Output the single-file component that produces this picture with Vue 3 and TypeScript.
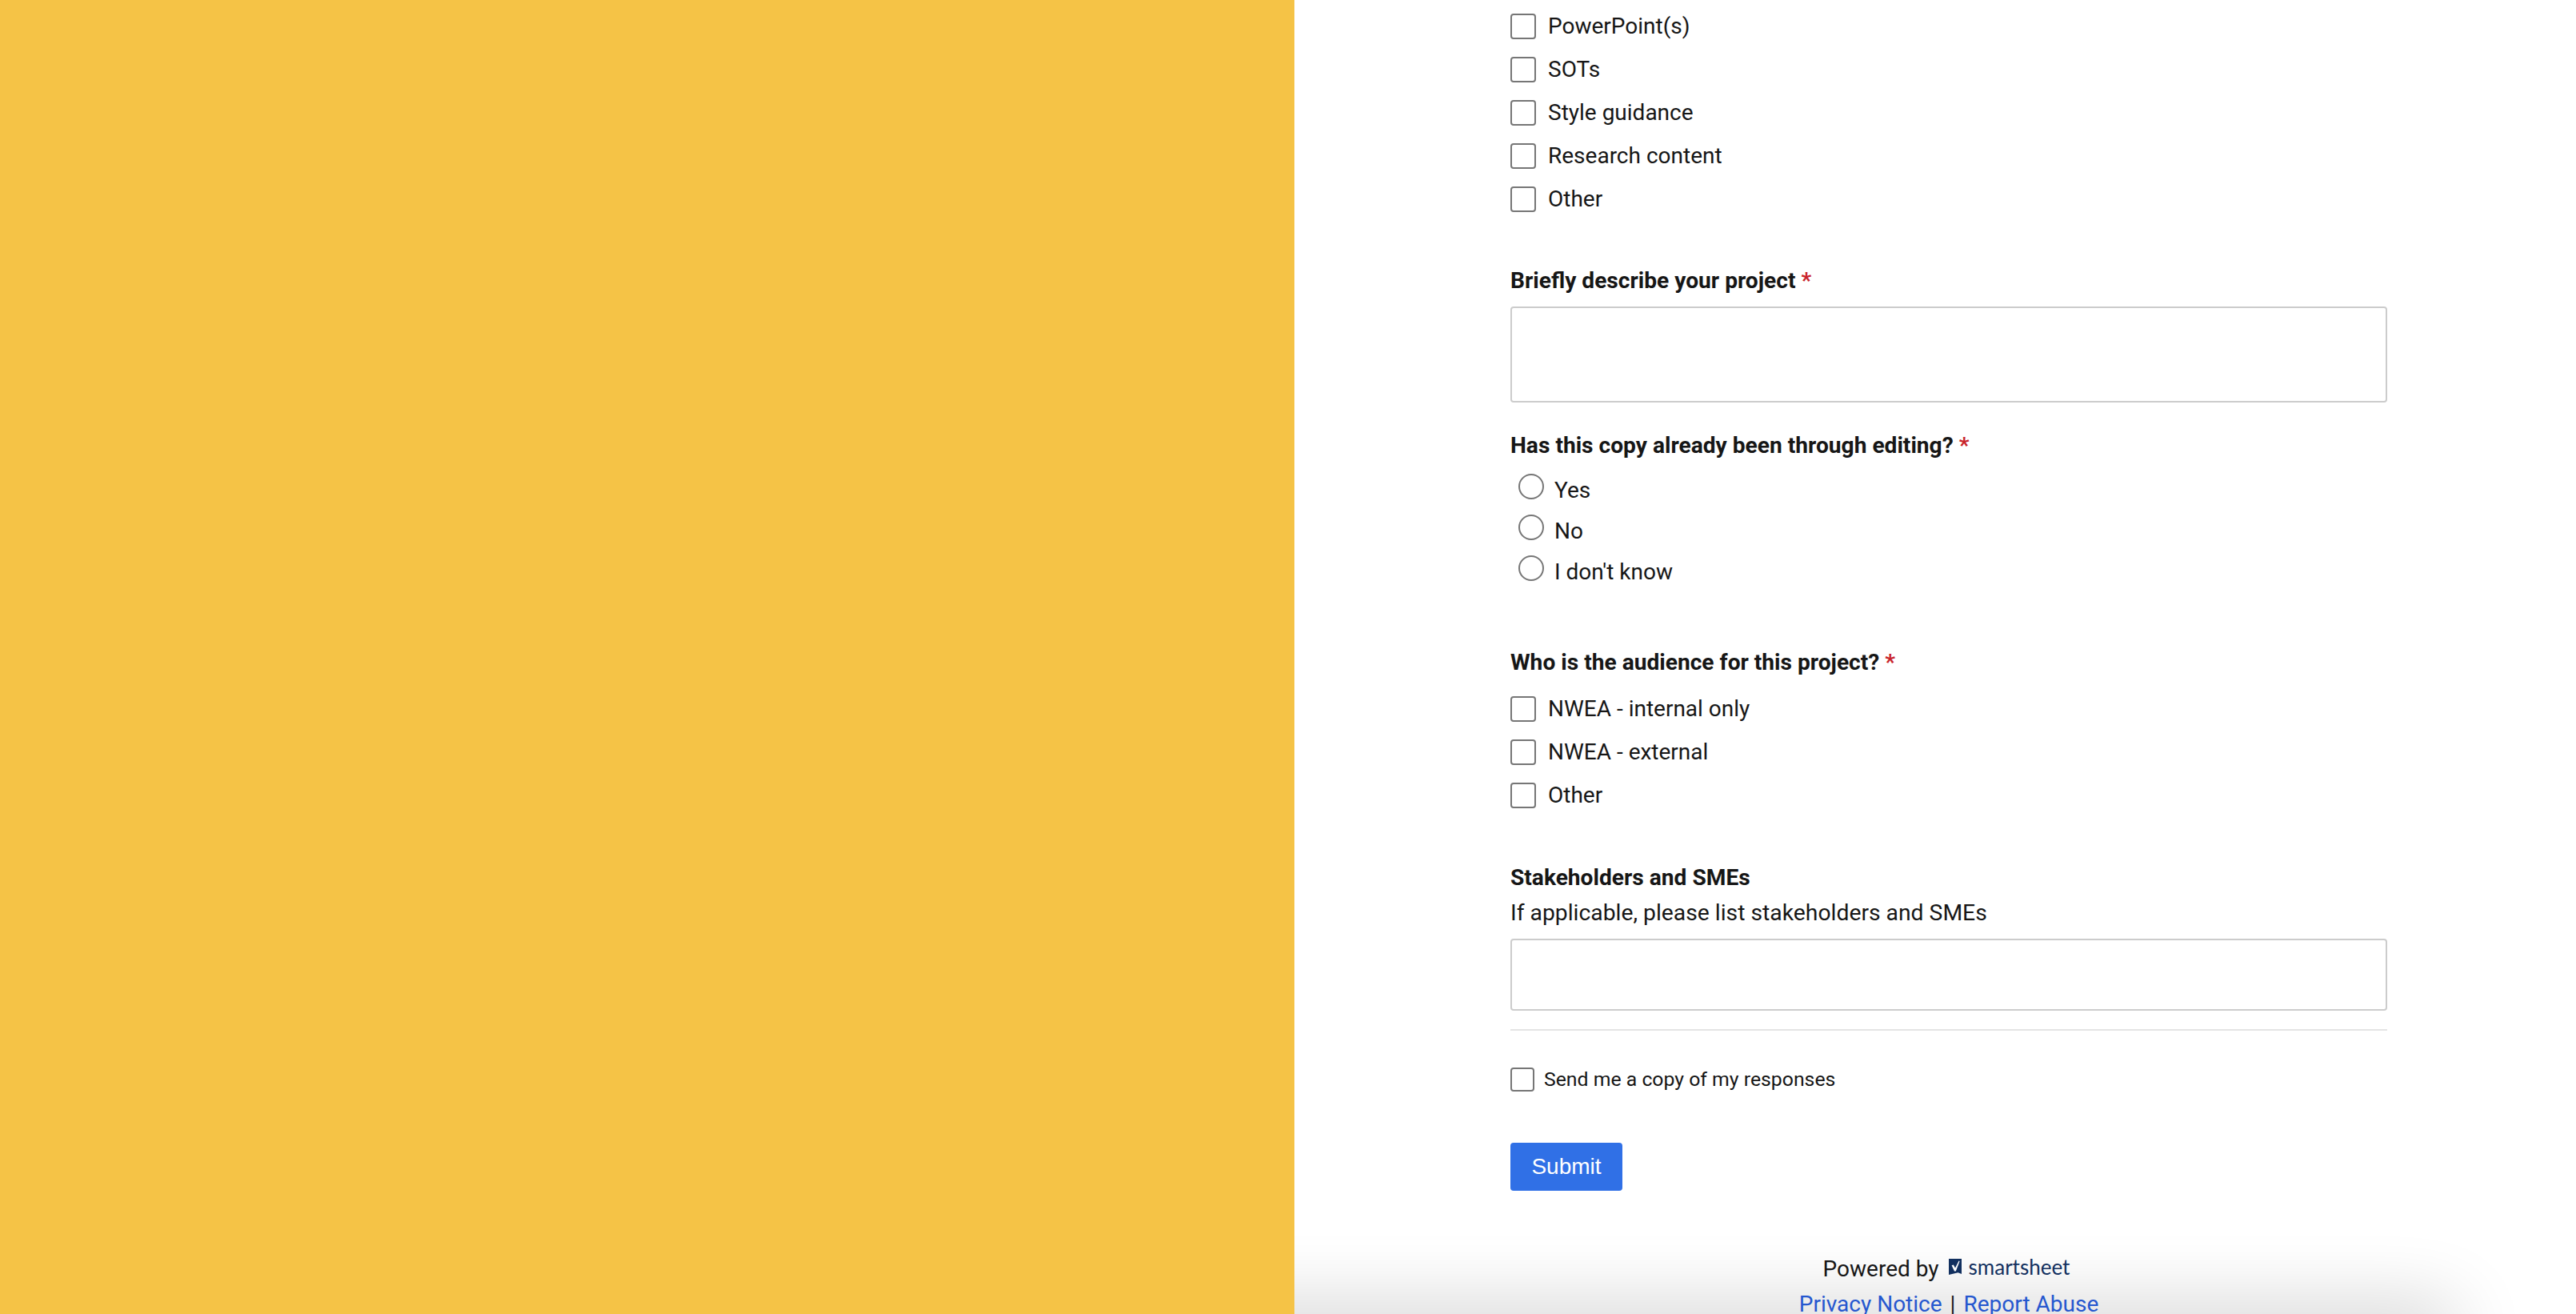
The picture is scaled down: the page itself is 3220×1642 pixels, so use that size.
<script setup lang="ts">
const deliverables = ['PowerPoint(s)', 'SOTs', 'Style guidance', 'Research content', 'Other']
const editing = ['Yes', 'No', "I don't know"]
const audience = ['NWEA - internal only', 'NWEA - external', 'Other']
</script>

<template>
  <div class="page">
    <div class="banner"></div>
    <main class="panel">
      <form class="form" @submit.prevent>
        <div class="checks first">
          <label v-for="item in deliverables" :key="item" class="check">
            <input type="checkbox" />
            <span>{{ item }}</span>
          </label>
        </div>

        <div class="title describe">Briefly describe your project <em>*</em></div>
        <textarea class="field tall"></textarea>

        <div class="title edited">Has this copy already been through editing? <em>*</em></div>
        <div class="radios">
          <label v-for="item in editing" :key="item" class="radio">
            <input type="radio" name="editing" />
            <span>{{ item }}</span>
          </label>
        </div>

        <div class="title who">Who is the audience for this project? <em>*</em></div>
        <div class="checks">
          <label v-for="item in audience" :key="item" class="check">
            <input type="checkbox" />
            <span>{{ item }}</span>
          </label>
        </div>

        <div class="title stake">Stakeholders and SMEs</div>
        <div class="hint">If applicable, please list stakeholders and SMEs</div>
        <textarea class="field short"></textarea>

        <hr class="rule" />

        <label class="copy">
          <input type="checkbox" />
          <span>Send me a copy of my responses</span>
        </label>

        <button class="submit" type="submit">Submit</button>

        <footer class="foot">
          <div class="powered">
            Powered by
            <span class="brand">
              <svg width="16" height="20" viewBox="0 0 16 20" aria-hidden="true">
                <path d="M0 0H16V19L11.5 17.2 0 20Z" fill="#12305f" />
                <path d="M3.6 8.2 5.8 7.6 8 11.4 12.6 2.4 13.6 3 8.8 15.6H7Z" fill="#fff" />
              </svg>
              <span class="word">smartsheet</span>
            </span>
          </div>
          <div class="links"><a href="#">Privacy Notice</a><i>|</i><a href="#">Report Abuse</a></div>
        </footer>
      </form>
    </main>
    <div class="shade"></div>
  </div>
</template>

<style>
html,
body {
  margin: 0;
  background: #fff;
}
</style>

<style scoped>
.page {
  position: relative;
  display: flex;
  height: 1642px;
  overflow: hidden;
  font-family: Roboto, 'Liberation Sans', sans-serif;
  font-size: 28px;
  color: #161616;
}

.banner {
  position: relative;
  z-index: 2;
  width: 1618px;
  flex: none;
  background: #f5c346;
}

.panel {
  flex: 1;
  padding-left: 270px;
}

.form {
  position: relative;
  z-index: 1;
  width: 1096px;
  padding-top: 6px;
}

.checks {
  display: flex;
  flex-direction: column;
}

.check {
  display: flex;
  align-items: center;
  gap: 15px;
  height: 54px;
  line-height: 36px;
}

input {
  appearance: none;
  flex: none;
  box-sizing: border-box;
  margin: 0;
  background: #fff;
  border: 2px solid #767676;
}

.check input {
  width: 32px;
  height: 32px;
  border-radius: 4px;
}

.title {
  font-size: 28.15px;
  font-weight: 700;
  line-height: 36px;
}

.title em {
  font-style: normal;
  color: #c9242b;
}

.describe {
  margin-top: 57px;
  margin-bottom: 14px;
}

.field {
  display: block;
  box-sizing: border-box;
  width: 100%;
  margin: 0;
  resize: none;
  background: #fff;
  border: 2px solid #ccc;
  border-radius: 4px;
}

.tall {
  height: 120px;
}

.short {
  height: 90px;
}

.edited {
  margin-top: 36px;
  margin-bottom: 12px;
}

.radios {
  display: flex;
  flex-direction: column;
}

.radio {
  display: flex;
  align-items: center;
  gap: 13px;
  height: 51px;
  padding-left: 10px;
  line-height: 36px;
}

.radio input {
  width: 32px;
  height: 32px;
  border-radius: 50%;
  transform: translateY(-5px);
}

.who {
  margin-top: 70px;
  margin-bottom: 13px;
}

.stake {
  margin-top: 58px;
}

.hint {
  margin-top: 8px;
  margin-bottom: 14px;
  font-size: 28.3px;
  line-height: 36px;
}

.rule {
  height: 2px;
  margin: 23px 0 0;
  background: #e4e4e4;
  border: 0;
}

.copy {
  display: flex;
  align-items: center;
  gap: 12px;
  margin-top: 46px;
  font-size: 24.8px;
  line-height: 30px;
}

.copy input {
  width: 30px;
  height: 30px;
  border-radius: 4px;
}

.submit {
  display: block;
  width: 140px;
  height: 60px;
  margin-top: 64px;
  padding: 0;
  font-family: 'Liberation Sans', Arial, sans-serif;
  font-size: 28px;
  color: #fff;
  background: #3070e6;
  border: 0;
  border-radius: 4px;
}

.foot {
  margin-top: 76px;
  text-align: center;
  line-height: 44px;
}

.powered {
  display: flex;
  align-items: center;
  justify-content: center;
  gap: 12px;
  height: 44px;
  padding-right: 6px;
}

.brand {
  display: inline-flex;
  align-items: center;
  gap: 9px;
  transform: translateY(-3px);
}

.word {
  font-family: Lato, sans-serif;
  font-size: 26px;
  line-height: 30px;
  color: #12305f;
}

.links a {
  color: #2557cf;
  text-decoration: none;
}

.links i {
  margin: 0 10px;
  font-style: normal;
}

.shade {
  position: absolute;
  top: 1642px;
  left: 1500px;
  width: 1558px;
  height: 40px;
  box-shadow: 0 0 90px 10px rgba(0, 0, 0, 0.2);
}
</style>
